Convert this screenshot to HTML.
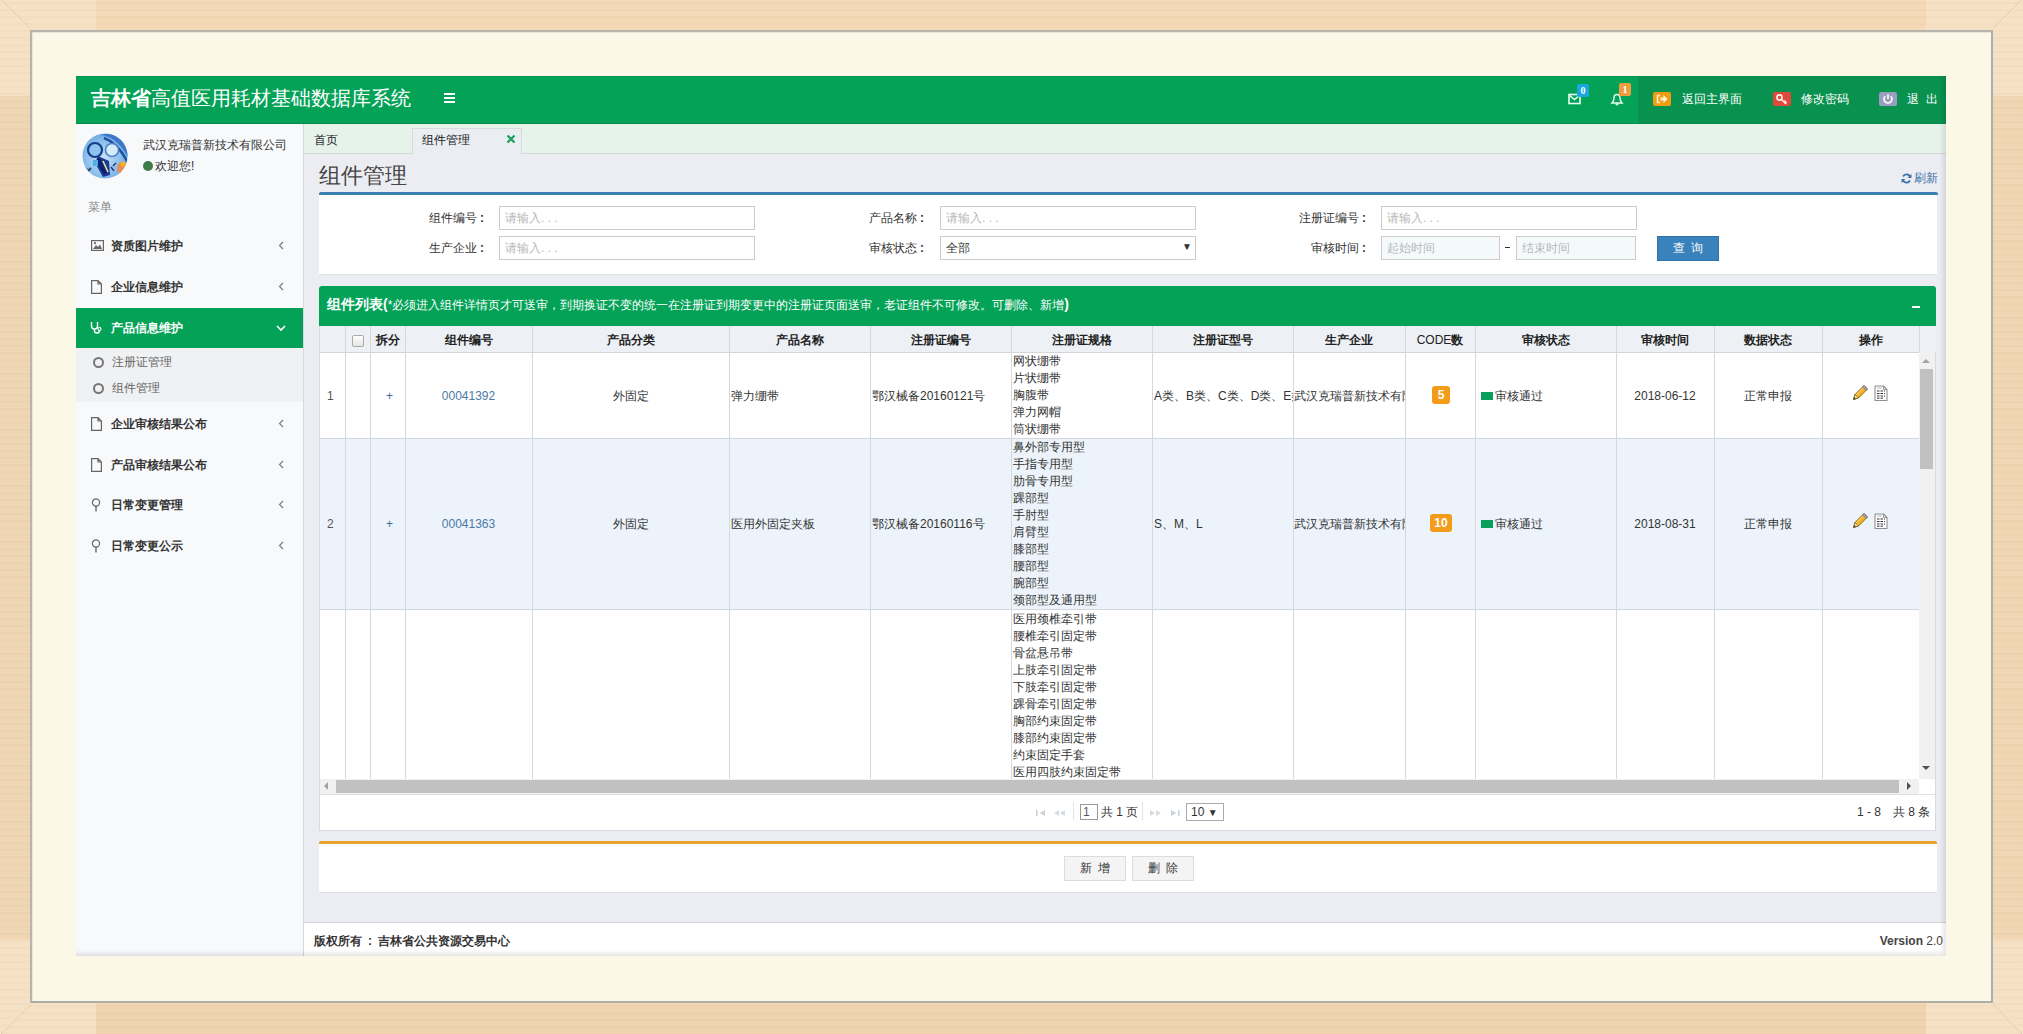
<!DOCTYPE html><html><head><meta charset="utf-8"><style>
*{box-sizing:border-box;margin:0;padding:0}
html,body{width:2023px;height:1034px;overflow:hidden}
body{position:relative;font-family:"Liberation Sans",sans-serif;font-size:12px;color:#333;background:#efd3ad}
.abs{position:absolute}
.t{position:absolute;white-space:nowrap;line-height:1}
</style></head><body>
<div class="abs" style="left:0;top:0;width:2023px;height:31px;background:repeating-linear-gradient(180deg,rgba(255,255,255,0.05) 0 2px,rgba(190,130,70,0.035) 2px 4px,rgba(255,240,220,0.03) 4px 7px),linear-gradient(90deg,#f5e0c4 0 96px,#f3d8b5 96px 1926px,#f5e0c4 1926px);clip-path:polygon(0 0,2023px 0,1992px 31px,31px 31px)"></div>
<div class="abs" style="left:0;top:1003px;width:2023px;height:31px;background:repeating-linear-gradient(180deg,rgba(255,255,255,0.05) 0 2px,rgba(190,130,70,0.035) 2px 4px,rgba(255,240,220,0.03) 4px 7px),linear-gradient(90deg,#f5e0c4 0 96px,#efd3ae 96px 1926px,#f5e0c4 1926px);clip-path:polygon(31px 0,1992px 0,2023px 31px,0 31px)"></div>
<div class="abs" style="left:0;top:0;width:31px;height:1034px;background:repeating-linear-gradient(180deg,rgba(255,255,255,0.05) 0 2px,rgba(190,130,70,0.035) 2px 4px,rgba(255,240,220,0.03) 4px 7px),linear-gradient(180deg,#f5e0c4 0 96px,#efd5b2 96px 940px,#f5e0c4 940px);clip-path:polygon(0 0,31px 31px,31px 1003px,0 1034px)"></div>
<div class="abs" style="left:1992px;top:0;width:31px;height:1034px;background:repeating-linear-gradient(180deg,rgba(255,255,255,0.05) 0 2px,rgba(190,130,70,0.035) 2px 4px,rgba(255,240,220,0.03) 4px 7px),linear-gradient(180deg,#f5e0c4 0 96px,#f0d5b2 96px 940px,#f5e0c4 940px);clip-path:polygon(31px 0,31px 1034px,0 1003px,0 31px)"></div>
<svg class="abs" style="left:0;top:0" width="2023" height="1034"><g stroke="#f8ead8" stroke-width="1"><path d="M0 0 L31 31 M2023 0 L1992 31 M0 1034 L31 1003 M2023 1034 L1992 1003"/></g><g stroke="#dca56a" stroke-width="0.7" opacity="0.6"><path d="M1 0 L31 30 M2022 0 L1993 29 M1 1034 L31 1004 M2022 1034 L1993 1004"/></g></svg>
<div class="abs" style="left:30px;top:30px;width:1963px;height:973px;background:#fcf8e8;border-left:2px solid #b7b6ae;border-top:2px solid #b7b6ae;border-right:2px solid #aeada6;border-bottom:2px solid #aeada6;box-shadow:inset 1px 1px 1px rgba(0,0,0,0.08)"></div>
<div class="abs" style="left:76px;top:76px;width:1870px;height:880px;background:#f8f9fb;overflow:hidden">
<div class="abs" style="left:0;top:0;width:1870px;height:48px;background:#03a257;border-bottom:1px solid #078a4b"></div>
<div class="abs" style="left:1562px;top:0;width:308px;height:47px;background:#08914f"></div>
<div class="abs" style="left:0;top:0;width:1870px;height:1px;background:#0a8d4d;opacity:0.7"></div>
<div class="t" style="left:15px;top:10px;font-size:20px;line-height:24px;color:#fff"><b>吉林省</b>高值医用耗材基础数据库系统</div>
<div class="abs" style="left:368px;top:17px;width:11px;height:2px;background:#fff"></div>
<div class="abs" style="left:368px;top:21px;width:11px;height:2px;background:#fff"></div>
<div class="abs" style="left:368px;top:25px;width:11px;height:2px;background:#fff"></div>
<svg class="abs" style="left:1492px;top:17px" width="14" height="12" viewBox="0 0 14 12"><rect x="1" y="1.5" width="11" height="9" fill="none" stroke="#e8fff0" stroke-width="1.6"/><path d="M1 2 L6.5 6.5 L12 2" fill="none" stroke="#e8fff0" stroke-width="1.6"/></svg>
<div class="t" style="left:1501px;top:8px;width:12px;height:13px;background:#1aa6de;border-radius:2px;color:#fff;font-size:10px;font-weight:bold;line-height:13px;text-align:center;font-family:Liberation Serif,serif">0</div>
<svg class="abs" style="left:1534px;top:16px" width="14" height="14" viewBox="0 0 14 14"><path d="M2 11 Q4 9 4 6 Q4 2.5 7 2.5 Q10 2.5 10 6 Q10 9 12 11 Z" fill="none" stroke="#e8fff0" stroke-width="1.4"/><circle cx="7" cy="12.3" r="1.3" fill="#e8fff0"/></svg>
<div class="t" style="left:1543px;top:7px;width:12px;height:13px;background:#ee9c3d;border-radius:2px;color:#fff;font-size:10px;font-weight:bold;line-height:13px;text-align:center;font-family:Liberation Serif,serif">1</div>
<div class="abs" style="left:1577px;top:16px;width:18px;height:14px;background:#f39c12;border-radius:2px"></div>
<svg class="abs" style="left:1577px;top:16px" width="18" height="14" viewBox="0 0 18 14"><path d="M7 3.5 H4.5 V10.5 H7" fill="none" stroke="#fff5d0" stroke-width="1.5"/><path d="M7.5 5.5 H10.5 V3 L14.5 7 L10.5 11 V8.5 H7.5 Z" fill="#fff5d0"/></svg>
<div class="t" style="left:1606px;top:17px;color:#fff;font-size:12px">返回主界面</div>
<div class="abs" style="left:1697px;top:16px;width:18px;height:14px;background:#e3493b;border-radius:2px"></div>
<svg class="abs" style="left:1697px;top:16px" width="18" height="14" viewBox="0 0 18 14"><circle cx="6.5" cy="5.5" r="2.6" fill="none" stroke="#fff0e8" stroke-width="1.6"/><path d="M8.3 7.3 L13 12 M11 10 L12.5 8.5 M12.3 11.3 L13.6 10" stroke="#fff0e8" stroke-width="1.6"/></svg>
<div class="t" style="left:1725px;top:17px;color:#fff;font-size:12px">修改密码</div>
<div class="abs" style="left:1803px;top:16px;width:18px;height:14px;background:#9a9dc0;border-radius:2px"></div>
<svg class="abs" style="left:1803px;top:16px" width="18" height="14" viewBox="0 0 18 14"><path d="M6.2 4.2 A4 4 0 1 0 11.8 4.2" fill="none" stroke="#fff" stroke-width="1.6"/><path d="M9 2.2 V7" stroke="#fff" stroke-width="1.6"/></svg>
<div class="t" style="left:1831px;top:17px;color:#fff;font-size:12px;letter-spacing:7px">退出</div>
<div class="abs" style="left:0;top:48px;width:228px;height:832px;background:#f8f9fb;border-right:1px solid #d5d8de"></div>
<svg class="abs" style="left:6px;top:57px" width="46" height="46" viewBox="0 0 46 46"><defs><clipPath id="cc"><circle cx="23" cy="23" r="22.5"/></clipPath><radialGradient id="ag" cx="45%" cy="55%" r="60%"><stop offset="0" stop-color="#c9e2f8"/><stop offset="0.6" stop-color="#8fc0ec"/><stop offset="1" stop-color="#5f9fdc"/></radialGradient></defs><g clip-path="url(#cc)"><rect width="46" height="46" fill="url(#ag)"/><path d="M18 2 Q34 3 46 24 L46 10 L30 0 Z" fill="#3d78c8"/><path d="M22 5 Q36 10 46 30" fill="none" stroke="#1d4f9a" stroke-width="2.5"/><circle cx="13" cy="17" r="7" fill="#8ec2f0" stroke="#123f86" stroke-width="2.2"/><circle cx="30" cy="17" r="6.5" fill="#d7ecfb" stroke="#4f84c8" stroke-width="1.6"/><path d="M16 23 L27 28 L28 42 L21 44 L13 30 Z" fill="#1a3a8f"/><path d="M17 24 L25 40 L22 42 L14 28 Z" fill="#0c2270"/><path d="M2 34 L6 38 L9 35" fill="none" stroke="#2a3f6a" stroke-width="2"/><path d="M21 28 L26 39" stroke="#f3e7a8" stroke-width="1.5"/><rect x="11" y="27" width="5" height="6" fill="#4fb0e8"/><path d="M36 31 Q40 28 44 30 L44 40 Q38 42 35 38 Z" fill="#e98e4e"/><circle cx="41" cy="31" r="2.5" fill="#f2b51e"/><path d="M29 34 L32 38 M31 33 L34 30" stroke="#233a78" stroke-width="1.5"/></g></svg>
<div class="t" style="left:67px;top:63px;color:#333;font-size:12px">武汉克瑞普新技术有限公司</div>
<div class="abs" style="left:67px;top:85px;width:10px;height:10px;border-radius:50%;background:#3c7d45"></div>
<div class="t" style="left:79px;top:84px;color:#333;font-size:12px">欢迎您!</div>
<div class="t" style="left:12px;top:125px;color:#888;font-size:12px">菜单</div>
<div class="t" style="left:35px;top:164px;color:#333;font-size:12px;font-weight:bold">资质图片维护</div>
<svg class="abs" style="left:202px;top:165px" width="6" height="9" viewBox="0 0 6 9"><path d="M5 1 L1.5 4.5 L5 8" fill="none" stroke="#777" stroke-width="1.1"/></svg>
<svg class="abs" style="left:15px;top:164px" width="13" height="11" viewBox="0 0 13 11"><rect x="0.6" y="0.6" width="11.8" height="9.8" fill="none" stroke="#666" stroke-width="1.2"/><path d="M2 9 L5 5 L7 7 L9 4.5 L11 9 Z" fill="#666"/><circle cx="4" cy="3.2" r="1.1" fill="#666"/></svg>
<div class="t" style="left:35px;top:205px;color:#333;font-size:12px;font-weight:bold">企业信息维护</div>
<svg class="abs" style="left:202px;top:206px" width="6" height="9" viewBox="0 0 6 9"><path d="M5 1 L1.5 4.5 L5 8" fill="none" stroke="#777" stroke-width="1.1"/></svg>
<svg class="abs" style="left:15px;top:204px" width="11" height="14" viewBox="0 0 11 14"><path d="M0.6 0.6 H7 L10.4 4 V13.4 H0.6 Z M7 0.6 V4 H10.4" fill="none" stroke="#666" stroke-width="1.2"/></svg>
<div class="abs" style="left:0;top:232px;width:227px;height:41px;background:#03a257"></div>
<div class="t" style="left:35px;top:246px;color:#fff;font-size:12px;font-weight:bold">产品信息维护</div>
<svg class="abs" style="left:200px;top:249px" width="10" height="7" viewBox="0 0 10 7"><path d="M1 1 L5 5 L9 1" fill="none" stroke="#fff" stroke-width="1.6"/></svg>
<svg class="abs" style="left:14px;top:245px" width="12" height="13" viewBox="0 0 12 13"><path d="M1.5 1 V5 Q1.5 8 4.5 8 Q7.5 8 7.5 5 V1" fill="none" stroke="#fff" stroke-width="1.4"/><path d="M4.5 8 V10 Q4.5 12 7 12 Q9.5 12 9.5 9.5" fill="none" stroke="#fff" stroke-width="1.4"/><circle cx="9.5" cy="8" r="1.5" fill="none" stroke="#fff" stroke-width="1.2"/></svg>
<div class="abs" style="left:0;top:272px;width:227px;height:54px;background:#f0f1f3"></div>
<div class="abs" style="left:17px;top:281px;width:11px;height:11px;border-radius:50%;border:2px solid #777"></div>
<div class="t" style="left:36px;top:280px;color:#666;font-size:12px">注册证管理</div>
<div class="abs" style="left:17px;top:307px;width:11px;height:11px;border-radius:50%;border:2px solid #777"></div>
<div class="t" style="left:36px;top:306px;color:#666;font-size:12px">组件管理</div>
<div class="t" style="left:35px;top:342px;color:#333;font-size:12px;font-weight:bold">企业审核结果公布</div>
<svg class="abs" style="left:202px;top:343px" width="6" height="9" viewBox="0 0 6 9"><path d="M5 1 L1.5 4.5 L5 8" fill="none" stroke="#777" stroke-width="1.1"/></svg>
<svg class="abs" style="left:15px;top:341px" width="11" height="14" viewBox="0 0 11 14"><path d="M0.6 0.6 H7 L10.4 4 V13.4 H0.6 Z M7 0.6 V4 H10.4" fill="none" stroke="#666" stroke-width="1.2"/></svg>
<div class="t" style="left:35px;top:383px;color:#333;font-size:12px;font-weight:bold">产品审核结果公布</div>
<svg class="abs" style="left:202px;top:384px" width="6" height="9" viewBox="0 0 6 9"><path d="M5 1 L1.5 4.5 L5 8" fill="none" stroke="#777" stroke-width="1.1"/></svg>
<svg class="abs" style="left:15px;top:382px" width="11" height="14" viewBox="0 0 11 14"><path d="M0.6 0.6 H7 L10.4 4 V13.4 H0.6 Z M7 0.6 V4 H10.4" fill="none" stroke="#666" stroke-width="1.2"/></svg>
<div class="t" style="left:35px;top:423px;color:#333;font-size:12px;font-weight:bold">日常变更管理</div>
<svg class="abs" style="left:202px;top:424px" width="6" height="9" viewBox="0 0 6 9"><path d="M5 1 L1.5 4.5 L5 8" fill="none" stroke="#777" stroke-width="1.1"/></svg>
<svg class="abs" style="left:15px;top:422px" width="10" height="14" viewBox="0 0 10 14"><circle cx="5" cy="4.5" r="3.6" fill="none" stroke="#666" stroke-width="1.2"/><path d="M5 8 V13.5" stroke="#666" stroke-width="1.4"/></svg>
<div class="t" style="left:35px;top:464px;color:#333;font-size:12px;font-weight:bold">日常变更公示</div>
<svg class="abs" style="left:202px;top:465px" width="6" height="9" viewBox="0 0 6 9"><path d="M5 1 L1.5 4.5 L5 8" fill="none" stroke="#777" stroke-width="1.1"/></svg>
<svg class="abs" style="left:15px;top:463px" width="10" height="14" viewBox="0 0 10 14"><circle cx="5" cy="4.5" r="3.6" fill="none" stroke="#666" stroke-width="1.2"/><path d="M5 8 V13.5" stroke="#666" stroke-width="1.4"/></svg>
<div class="abs" style="left:228px;top:48px;width:1642px;height:30px;background:#e6f3ea;border-bottom:1px solid #d3dbd6"></div>
<div class="abs" style="left:228px;top:78px;width:1642px;height:768px;background:#ecedf3"></div>
<div class="t" style="left:238px;top:58px;color:#222;font-size:12px">首页</div>
<div class="abs" style="left:336px;top:52px;width:110px;height:26px;background:#eaedf1;border:1px solid #d6dcd9;border-bottom:none"></div>
<div class="t" style="left:346px;top:58px;color:#222;font-size:12px">组件管理</div>
<svg class="abs" style="left:430px;top:58px" width="10" height="10" viewBox="0 0 10 10"><path d="M1.5 1.5 L8.5 8.5 M8.5 1.5 L1.5 8.5" stroke="#17a05a" stroke-width="2.2"/></svg>
<div class="t" style="left:243px;top:87px;color:#444;font-size:22px;line-height:26px">组件管理</div>
<svg class="abs" style="left:1825px;top:97px" width="11" height="11" viewBox="0 0 11 11"><path d="M9.3 4.2 A4 4 0 0 0 2 3.5 M1.7 6.8 A4 4 0 0 0 9 7.5" fill="none" stroke="#3c72a5" stroke-width="1.8"/><path d="M10.5 1 V5 H6.5 Z M0.5 10 V6 H4.5 Z" fill="#3c72a5"/></svg>
<div class="t" style="left:1838px;top:96px;color:#3c72a5;font-size:12px">刷新</div>
<div class="abs" style="left:243px;top:116px;width:1619px;height:3px;background:#3c7fb1;border-radius:2px 2px 0 0"></div>
<div class="abs" style="left:243px;top:119px;width:1618px;height:80px;background:#fff;border-bottom:1px solid #dde0e5"></div>
<div class="t" style="left:207px;width:201px;text-align:right;top:136px;color:#333;font-size:12px">组件编号<span style="display:inline-block;width:7px;text-align:right;font-weight:bold">:</span></div>
<div class="abs" style="left:423px;top:130px;width:256px;height:24px;background:#fff;border:1px solid #ccc"></div>
<div class="t" style="left:429px;top:136px;color:#b8b8b8;font-size:12px">请输入. . .</div>
<div class="t" style="left:207px;width:201px;text-align:right;top:166px;color:#333;font-size:12px">生产企业<span style="display:inline-block;width:7px;text-align:right;font-weight:bold">:</span></div>
<div class="abs" style="left:423px;top:160px;width:256px;height:24px;background:#fff;border:1px solid #ccc"></div>
<div class="t" style="left:429px;top:166px;color:#b8b8b8;font-size:12px">请输入. . .</div>
<div class="t" style="left:647px;width:201px;text-align:right;top:136px;color:#333;font-size:12px">产品名称<span style="display:inline-block;width:7px;text-align:right;font-weight:bold">:</span></div>
<div class="abs" style="left:864px;top:130px;width:256px;height:24px;background:#fff;border:1px solid #ccc"></div>
<div class="t" style="left:870px;top:136px;color:#b8b8b8;font-size:12px">请输入. . .</div>
<div class="t" style="left:647px;width:201px;text-align:right;top:166px;color:#333;font-size:12px">审核状态<span style="display:inline-block;width:7px;text-align:right;font-weight:bold">:</span></div>
<div class="abs" style="left:864px;top:160px;width:256px;height:24px;background:#fff;border:1px solid #ccc"></div>
<div class="t" style="left:870px;top:166px;color:#333;font-size:12px">全部</div>
<div class="t" style="left:1106px;top:166px;color:#333;font-size:10px">▼</div>
<div class="t" style="left:1089px;width:201px;text-align:right;top:136px;color:#333;font-size:12px">注册证编号<span style="display:inline-block;width:7px;text-align:right;font-weight:bold">:</span></div>
<div class="abs" style="left:1305px;top:130px;width:256px;height:24px;background:#fff;border:1px solid #ccc"></div>
<div class="t" style="left:1311px;top:136px;color:#b8b8b8;font-size:12px">请输入. . .</div>
<div class="t" style="left:1089px;width:201px;text-align:right;top:166px;color:#333;font-size:12px">审核时间<span style="display:inline-block;width:7px;text-align:right;font-weight:bold">:</span></div>
<div class="abs" style="left:1305px;top:160px;width:119px;height:24px;background:#f4fafc;border:1px solid #ccc"></div>
<div class="t" style="left:1311px;top:166px;color:#b8b8b8;font-size:12px">起始时间</div>
<div class="abs" style="left:1440px;top:160px;width:120px;height:24px;background:#f4fafc;border:1px solid #ccc"></div>
<div class="t" style="left:1446px;top:166px;color:#b8b8b8;font-size:12px">结束时间</div>
<div class="abs" style="left:1429px;top:171px;width:5px;height:1px;background:#333"></div>
<div class="abs" style="left:1581px;top:160px;width:62px;height:25px;background:#3a82bb;border:1px solid #2f73a8"></div>
<div class="t" style="left:1581px;width:62px;text-align:center;top:166px;color:#fff;font-size:12px;letter-spacing:6px;text-indent:6px">查询</div>
<div class="abs" style="left:243px;top:210px;width:1617px;height:40px;background:#03a257;border-radius:3px 3px 0 0"></div>
<div class="t" style="left:251px;top:220px;color:#fff;font-size:12px;line-height:16px"><b style="font-size:14px">组件列表(</b>*必须进入组件详情页才可送审，到期换证不变的统一在注册证到期变更中的注册证页面送审，老证组件不可修改。可删除、新增<b style="font-size:14px">)</b></div>
<div class="abs" style="left:1836px;top:230px;width:8px;height:2px;background:#fff"></div>
<div class="abs" style="left:243px;top:250px;width:1617px;height:505px;background:#fff;border:1px solid #d7dbe0;border-top:none"></div>
<div class="abs" style="left:244px;top:250px;width:1616px;height:27px;background:#edf0f4;border-bottom:1px solid #d3d7dc"></div>
<div class="abs" style="left:276px;top:259px;width:12px;height:12px;border:1px solid #aaa;border-radius:2px;background:linear-gradient(#fff,#e6e6e6)"></div>
<div class="t" style="left:294px;width:35px;text-align:center;top:258px;color:#222;font-size:12px;font-weight:bold">拆分</div>
<div class="t" style="left:329px;width:127px;text-align:center;top:258px;color:#222;font-size:12px;font-weight:bold">组件编号</div>
<div class="t" style="left:456px;width:197px;text-align:center;top:258px;color:#222;font-size:12px;font-weight:bold">产品分类</div>
<div class="t" style="left:653px;width:141px;text-align:center;top:258px;color:#222;font-size:12px;font-weight:bold">产品名称</div>
<div class="t" style="left:794px;width:141px;text-align:center;top:258px;color:#222;font-size:12px;font-weight:bold">注册证编号</div>
<div class="t" style="left:935px;width:141px;text-align:center;top:258px;color:#222;font-size:12px;font-weight:bold">注册证规格</div>
<div class="t" style="left:1076px;width:141px;text-align:center;top:258px;color:#222;font-size:12px;font-weight:bold">注册证型号</div>
<div class="t" style="left:1217px;width:112px;text-align:center;top:258px;color:#222;font-size:12px;font-weight:bold">生产企业</div>
<div class="t" style="left:1329px;width:70px;text-align:center;top:258px;color:#222;font-size:12px;font-weight:bold"><span style="font-weight:normal">CODE</span>数</div>
<div class="t" style="left:1399px;width:141px;text-align:center;top:258px;color:#222;font-size:12px;font-weight:bold">审核状态</div>
<div class="t" style="left:1540px;width:98px;text-align:center;top:258px;color:#222;font-size:12px;font-weight:bold">审核时间</div>
<div class="t" style="left:1638px;width:108px;text-align:center;top:258px;color:#222;font-size:12px;font-weight:bold">数据状态</div>
<div class="t" style="left:1746px;width:97px;text-align:center;top:258px;color:#222;font-size:12px;font-weight:bold">操作</div>
<div class="abs" style="left:244px;top:362px;width:1599px;height:172px;background:#edf3fa;border-top:1px solid #d3d7dc;border-bottom:1px solid #d3d7dc"></div>
<div class="abs" style="left:269px;top:250px;width:1px;height:453px;background:#d5d9de"></div>
<div class="abs" style="left:294px;top:250px;width:1px;height:453px;background:#d5d9de"></div>
<div class="abs" style="left:329px;top:250px;width:1px;height:453px;background:#d5d9de"></div>
<div class="abs" style="left:456px;top:250px;width:1px;height:453px;background:#d5d9de"></div>
<div class="abs" style="left:653px;top:250px;width:1px;height:453px;background:#d5d9de"></div>
<div class="abs" style="left:794px;top:250px;width:1px;height:453px;background:#d5d9de"></div>
<div class="abs" style="left:935px;top:250px;width:1px;height:453px;background:#d5d9de"></div>
<div class="abs" style="left:1076px;top:250px;width:1px;height:453px;background:#d5d9de"></div>
<div class="abs" style="left:1217px;top:250px;width:1px;height:453px;background:#d5d9de"></div>
<div class="abs" style="left:1329px;top:250px;width:1px;height:453px;background:#d5d9de"></div>
<div class="abs" style="left:1399px;top:250px;width:1px;height:453px;background:#d5d9de"></div>
<div class="abs" style="left:1540px;top:250px;width:1px;height:453px;background:#d5d9de"></div>
<div class="abs" style="left:1638px;top:250px;width:1px;height:453px;background:#d5d9de"></div>
<div class="abs" style="left:1746px;top:250px;width:1px;height:453px;background:#d5d9de"></div>
<div class="abs" style="left:1843px;top:250px;width:1px;height:453px;background:#d5d9de"></div>
<div class="t" style="left:251px;width:18px;top:314px;color:#555;font-size:12px;overflow:hidden">1</div>
<div class="t" style="left:296px;width:35px;text-align:center;top:314px;color:#3d6e99;font-size:12px;overflow:hidden">+</div>
<div class="t" style="left:329px;width:127px;text-align:center;top:314px;color:#4a7aa5;font-size:12px;overflow:hidden">00041392</div>
<div class="t" style="left:456px;width:197px;text-align:center;top:314px;color:#333;font-size:12px;overflow:hidden">外固定</div>
<div class="t" style="left:655px;width:139px;top:314px;color:#333;font-size:12px;overflow:hidden">弹力绷带</div>
<div class="t" style="left:796px;width:139px;top:314px;color:#333;font-size:12px;overflow:hidden">鄂汉械备20160121号</div>
<div class="t" style="left:1078px;width:139px;top:314px;color:#333;font-size:12px;overflow:hidden">A类、B类、C类、D类、E类</div>
<div class="t" style="left:1218px;width:111px;top:314px;color:#333;font-size:12px;overflow:hidden">武汉克瑞普新技术有限公司</div>
<div class="abs" style="left:1356px;top:310px;width:18px;height:18px;background:#f29c1a;border-radius:3px;color:#fff;font-weight:bold;font-size:12px;line-height:18px;text-align:center">5</div>
<div class="abs" style="left:1405px;top:316px;width:12px;height:8px;background:#07a05a"></div>
<div class="t" style="left:1419px;width:121px;top:314px;color:#333;font-size:12px;overflow:hidden">审核通过</div>
<div class="t" style="left:1540px;width:98px;text-align:center;top:314px;color:#333;font-size:12px;overflow:hidden">2018-06-12</div>
<div class="t" style="left:1638px;width:108px;text-align:center;top:314px;color:#333;font-size:12px;overflow:hidden">正常申报</div>
<div class="t" style="left:937px;top:278px;color:#333;font-size:12px;line-height:14px">网状绷带</div>
<div class="t" style="left:937px;top:295px;color:#333;font-size:12px;line-height:14px">片状绷带</div>
<div class="t" style="left:937px;top:312px;color:#333;font-size:12px;line-height:14px">胸腹带</div>
<div class="t" style="left:937px;top:329px;color:#333;font-size:12px;line-height:14px">弹力网帽</div>
<div class="t" style="left:937px;top:346px;color:#333;font-size:12px;line-height:14px">筒状绷带</div>
<div class="t" style="left:251px;width:18px;top:442px;color:#555;font-size:12px;overflow:hidden">2</div>
<div class="t" style="left:296px;width:35px;text-align:center;top:442px;color:#3d6e99;font-size:12px;overflow:hidden">+</div>
<div class="t" style="left:329px;width:127px;text-align:center;top:442px;color:#4a7aa5;font-size:12px;overflow:hidden">00041363</div>
<div class="t" style="left:456px;width:197px;text-align:center;top:442px;color:#333;font-size:12px;overflow:hidden">外固定</div>
<div class="t" style="left:655px;width:139px;top:442px;color:#333;font-size:12px;overflow:hidden">医用外固定夹板</div>
<div class="t" style="left:796px;width:139px;top:442px;color:#333;font-size:12px;overflow:hidden">鄂汉械备20160116号</div>
<div class="t" style="left:1078px;width:139px;top:442px;color:#333;font-size:12px;overflow:hidden">S、M、L</div>
<div class="t" style="left:1218px;width:111px;top:442px;color:#333;font-size:12px;overflow:hidden">武汉克瑞普新技术有限公司</div>
<div class="abs" style="left:1354px;top:438px;width:22px;height:18px;background:#f29c1a;border-radius:3px;color:#fff;font-weight:bold;font-size:12px;line-height:18px;text-align:center">10</div>
<div class="abs" style="left:1405px;top:444px;width:12px;height:8px;background:#07a05a"></div>
<div class="t" style="left:1419px;width:121px;top:442px;color:#333;font-size:12px;overflow:hidden">审核通过</div>
<div class="t" style="left:1540px;width:98px;text-align:center;top:442px;color:#333;font-size:12px;overflow:hidden">2018-08-31</div>
<div class="t" style="left:1638px;width:108px;text-align:center;top:442px;color:#333;font-size:12px;overflow:hidden">正常申报</div>
<div class="t" style="left:937px;top:364px;color:#333;font-size:12px;line-height:14px">鼻外部专用型</div>
<div class="t" style="left:937px;top:381px;color:#333;font-size:12px;line-height:14px">手指专用型</div>
<div class="t" style="left:937px;top:398px;color:#333;font-size:12px;line-height:14px">肋骨专用型</div>
<div class="t" style="left:937px;top:415px;color:#333;font-size:12px;line-height:14px">踝部型</div>
<div class="t" style="left:937px;top:432px;color:#333;font-size:12px;line-height:14px">手肘型</div>
<div class="t" style="left:937px;top:449px;color:#333;font-size:12px;line-height:14px">肩臂型</div>
<div class="t" style="left:937px;top:466px;color:#333;font-size:12px;line-height:14px">膝部型</div>
<div class="t" style="left:937px;top:483px;color:#333;font-size:12px;line-height:14px">腰部型</div>
<div class="t" style="left:937px;top:500px;color:#333;font-size:12px;line-height:14px">腕部型</div>
<div class="t" style="left:937px;top:517px;color:#333;font-size:12px;line-height:14px">颈部型及通用型</div>
<div class="t" style="left:937px;top:536px;color:#333;font-size:12px;line-height:14px">医用颈椎牵引带</div>
<div class="t" style="left:937px;top:553px;color:#333;font-size:12px;line-height:14px">腰椎牵引固定带</div>
<div class="t" style="left:937px;top:570px;color:#333;font-size:12px;line-height:14px">骨盆悬吊带</div>
<div class="t" style="left:937px;top:587px;color:#333;font-size:12px;line-height:14px">上肢牵引固定带</div>
<div class="t" style="left:937px;top:604px;color:#333;font-size:12px;line-height:14px">下肢牵引固定带</div>
<div class="t" style="left:937px;top:621px;color:#333;font-size:12px;line-height:14px">踝骨牵引固定带</div>
<div class="t" style="left:937px;top:638px;color:#333;font-size:12px;line-height:14px">胸部约束固定带</div>
<div class="t" style="left:937px;top:655px;color:#333;font-size:12px;line-height:14px">膝部约束固定带</div>
<div class="t" style="left:937px;top:672px;color:#333;font-size:12px;line-height:14px">约束固定手套</div>
<div class="t" style="left:937px;top:689px;color:#333;font-size:12px;line-height:14px">医用四肢约束固定带</div>
<svg class="abs" style="left:1776px;top:308px" width="17" height="17" viewBox="0 0 17 17"><path d="M1.5 15.5 L3 10.5 L12 1.5 L15.5 5 L6.5 14 Z" fill="#f5b31c" stroke="#7a5a20" stroke-width="0.9"/><path d="M4 11 L12.8 2.3" stroke="#fde08a" stroke-width="1"/><path d="M12 1.5 L15.5 5 L14 6.5 L10.5 3 Z" fill="#a89ab0" stroke="#6f6478" stroke-width="0.6"/><path d="M1.5 15.5 L3 10.5 L6.5 14 Z" fill="#f3d9a0" stroke="#6b5020" stroke-width="0.6"/><path d="M1.5 15.5 L2.2 13.2 L3.8 14.8 Z" fill="#3a3020"/></svg>
<svg class="abs" style="left:1798px;top:309px" width="14" height="17" viewBox="0 0 14 17"><path d="M1 1 H9.5 L13 4.5 V15.5 H1 Z" fill="#fff" stroke="#8f8f8f" stroke-width="1.1" stroke-linejoin="round"/><path d="M9.5 1 V4.5 H13" fill="none" stroke="#8f8f8f" stroke-width="0.9"/><g stroke="#333" stroke-width="1" stroke-dasharray="2.5 1"><path d="M3 6 H11 M3 8.5 H11 M3 11 H11 M3 13.2 H10"/></g><path d="M3 3 H8" stroke="#bbb" stroke-width="1"/></svg>
<svg class="abs" style="left:1776px;top:436px" width="17" height="17" viewBox="0 0 17 17"><path d="M1.5 15.5 L3 10.5 L12 1.5 L15.5 5 L6.5 14 Z" fill="#f5b31c" stroke="#7a5a20" stroke-width="0.9"/><path d="M4 11 L12.8 2.3" stroke="#fde08a" stroke-width="1"/><path d="M12 1.5 L15.5 5 L14 6.5 L10.5 3 Z" fill="#a89ab0" stroke="#6f6478" stroke-width="0.6"/><path d="M1.5 15.5 L3 10.5 L6.5 14 Z" fill="#f3d9a0" stroke="#6b5020" stroke-width="0.6"/><path d="M1.5 15.5 L2.2 13.2 L3.8 14.8 Z" fill="#3a3020"/></svg>
<svg class="abs" style="left:1798px;top:437px" width="14" height="17" viewBox="0 0 14 17"><path d="M1 1 H9.5 L13 4.5 V15.5 H1 Z" fill="#fff" stroke="#8f8f8f" stroke-width="1.1" stroke-linejoin="round"/><path d="M9.5 1 V4.5 H13" fill="none" stroke="#8f8f8f" stroke-width="0.9"/><g stroke="#333" stroke-width="1" stroke-dasharray="2.5 1"><path d="M3 6 H11 M3 8.5 H11 M3 11 H11 M3 13.2 H10"/></g><path d="M3 3 H8" stroke="#bbb" stroke-width="1"/></svg>
<div class="abs" style="left:1843px;top:276px;width:16px;height:427px;background:#f1f1f1"></div>
<div class="abs" style="left:1844px;top:293px;width:13px;height:100px;background:#c1c1c1"></div>
<svg class="abs" style="left:1845px;top:282px" width="10" height="6"><path d="M1 5 L5 1 L9 5 Z" fill="#a3a3a3"/></svg>
<svg class="abs" style="left:1845px;top:689px" width="10" height="6"><path d="M1 1 L5 5 L9 1 Z" fill="#505050"/></svg>
<div class="abs" style="left:244px;top:703px;width:1615px;height:16px;background:#fff;border-bottom:1px solid #dde0e4"></div>
<div class="abs" style="left:244px;top:703px;width:1599px;height:15px;background:#f1f1f1"></div>
<div class="abs" style="left:260px;top:704px;width:1563px;height:13px;background:#c1c1c1"></div>
<svg class="abs" style="left:247px;top:705px" width="6" height="10"><path d="M5 1 L1 5 L5 9 Z" fill="#a3a3a3"/></svg>
<svg class="abs" style="left:1830px;top:705px" width="6" height="10"><path d="M1 1 L5 5 L1 9 Z" fill="#505050"/></svg>
<svg class="abs" style="left:958px;top:732px" width="34" height="10" viewBox="0 0 34 10"><g fill="#c9d3da"><rect x="2" y="2" width="1.6" height="6"/><path d="M5.5 5 L11 2 V8 Z"/><path d="M20 5 L25 2 V8 Z M26 5 L31 2 V8 Z" opacity="0.8"/></g></svg>
<div class="abs" style="left:997px;top:726px;width:1px;height:18px;background:#e3e3e3"></div>
<div class="abs" style="left:1004px;top:728px;width:18px;height:16px;border:1px solid #999;background:#fff"></div>
<div class="t" style="left:1007px;top:730px;color:#555;font-size:12px">1</div>
<div class="t" style="left:1025px;top:730px;color:#333;font-size:12px">共 1 页</div>
<div class="abs" style="left:1066px;top:726px;width:1px;height:18px;background:#e3e3e3"></div>
<svg class="abs" style="left:1072px;top:732px" width="34" height="10" viewBox="0 0 34 10"><g fill="#c9d3da"><path d="M2 2 L7 5 L2 8 Z M8 2 L13 5 L8 8 Z" opacity="0.8"/><path d="M23 2 L28.5 5 L23 8 Z"/><rect x="30" y="2" width="1.6" height="6"/></g></svg>
<div class="abs" style="left:1110px;top:727px;width:38px;height:18px;border:1px solid #aaa;background:#fff"></div>
<div class="t" style="left:1115px;top:730px;color:#333;font-size:12px">10 <span style="font-size:10px">▼</span></div>
<div class="t" style="left:1781px;top:730px;color:#333;font-size:12px">1 - 8</div>
<div class="t" style="left:1817px;top:730px;color:#333;font-size:12px">共 8 条</div>
<div class="abs" style="left:243px;top:765px;width:1618px;height:3px;background:#e8a22e;border-radius:2px 2px 0 0"></div>
<div class="abs" style="left:243px;top:768px;width:1618px;height:49px;background:#fff;border-bottom:1px solid #dde0e5"></div>
<div class="abs" style="left:988px;top:780px;width:62px;height:25px;background:#f4f4f4;border:1px solid #dcdcdc"></div>
<div class="t" style="left:988px;width:62px;text-align:center;top:786px;color:#333;font-size:12px;letter-spacing:6px;text-indent:6px">新增</div>
<div class="abs" style="left:1056px;top:780px;width:62px;height:25px;background:#f4f4f4;border:1px solid #dcdcdc"></div>
<div class="t" style="left:1056px;width:62px;text-align:center;top:786px;color:#333;font-size:12px;letter-spacing:6px;text-indent:6px">删除</div>
<div class="abs" style="left:228px;top:846px;width:1642px;height:34px;background:#fff;border-top:1px solid #d2d6db"></div>
<div class="t" style="left:238px;top:859px;color:#333;font-size:12px;font-weight:bold">版权所有<span style="display:inline-block;width:16px;text-align:center">:</span>吉林省公共资源交易中心</div>
<div class="t" style="right:3px;top:859px;color:#444;font-size:12px"><b>Version</b> 2.0</div>
<div class="abs" style="left:0;top:0;width:1870px;height:880px;box-shadow:inset -3px -3px 4px rgba(0,0,0,0.10);pointer-events:none"></div>
</div>
</body></html>
